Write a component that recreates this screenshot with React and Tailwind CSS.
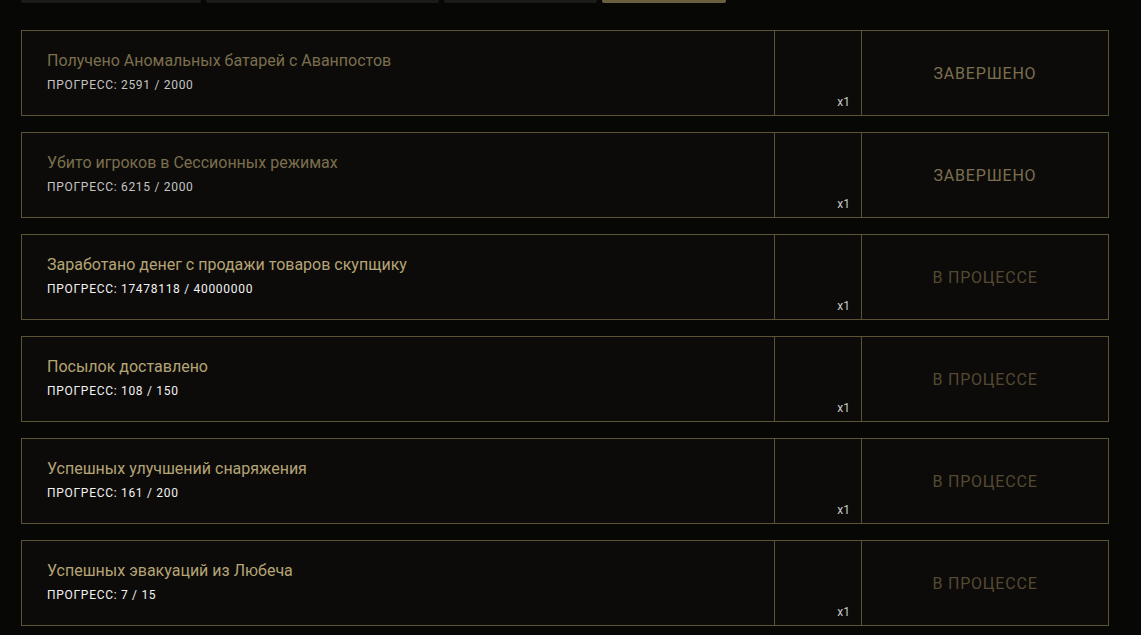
const tasks = [
  { title: 'Получено Аномальных батарей с Аванпостов', progress: '2591 / 2000', done: true },
  { title: 'Убито игроков в Сессионных режимах', progress: '6215 / 2000', done: true },
  { title: 'Заработано денег с продажи товаров скупщику', progress: '17478118 / 40000000', done: false },
  { title: 'Посылок доставлено', progress: '108 / 150', done: false },
  { title: 'Успешных улучшений снаряжения', progress: '161 / 200', done: false },
  { title: 'Успешных эвакуаций из Любеча', progress: '7 / 15', done: false },
];

const tabs = [
  { w: 'w-[180px]', active: false },
  { w: 'w-[233px]', active: false },
  { w: 'w-[153px]', active: false },
  { w: 'w-[124px]', active: true },
];

const TaskRow = ({ task }) => (
  <div className="flex h-[86px] border border-[#5c5234] bg-[#0c0b09]">
    <div className="flex-1 pl-[25px] pt-[20px]">
      <div className={`text-[16px] leading-5 ${task.done ? 'text-[#7b6f4e]' : 'text-[#b5a475]'}`}>
        {task.title}
      </div>
      <div className={`mt-[6px] text-[12px] leading-4 tracking-[0.7px] ${task.done ? 'text-[#c4c4c4]' : 'text-[#f2f2f2]'}`}>
        ПРОГРЕСС: {task.progress}
      </div>
    </div>
    <div className="w-[87px] border-l border-[#5c5234] flex items-end justify-end pr-[11px] pb-[5px]">
      <span className="text-[12px] leading-4 text-[#c8c8c8]">x1</span>
    </div>
    <div className="w-[247px] border-l border-[#5c5234] flex items-center justify-center pt-[2px]">
      <span className={`text-[16px] tracking-[0.8px] ${task.done ? 'text-[#7b6f50]' : 'text-[#544a32]'}`}>
        {task.done ? 'ЗАВЕРШЕНО' : 'В ПРОЦЕССЕ'}
      </span>
    </div>
  </div>
);

export default function App() {
  return (
    <div className="min-h-[635px] bg-[#070806] px-[21px] font-['Roboto',sans-serif] overflow-hidden">
      <div className="flex gap-[5px]">
        {tabs.map((t, i) => (
          <div
            key={i}
            className={`${t.w} h-[3px] rounded-b-[2px] ${t.active ? 'bg-[#6b5f3f]' : 'bg-[#1b1b19]'}`}
          />
        ))}
      </div>
      <div className="mt-[27px] w-[1088px] flex flex-col gap-[16px]">
        {tasks.map((task) => (
          <TaskRow key={task.title} task={task} />
        ))}
      </div>
    </div>
  );
}
